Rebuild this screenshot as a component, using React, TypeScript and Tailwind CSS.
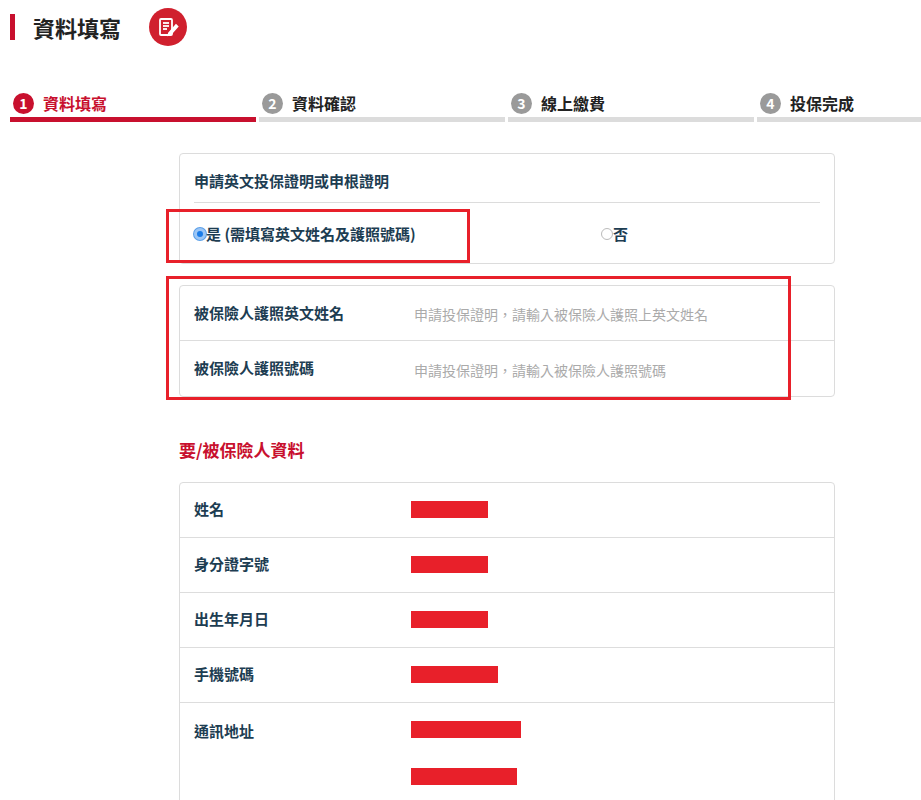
import React from "react";

const F = { fontFamily: '"Noto Sans CJK TC", "Noto Sans", sans-serif' };

function Step({ n, label, active }: { n: string; label: string; active?: boolean }) {
  return (
    <div className="w-[246px] shrink-0 flex flex-col">
      <div className="flex items-center gap-[9px] h-[28px] pl-[3px]">
        <span className={`w-[21px] h-[21px] rounded-full flex items-center justify-center text-white text-[14px] font-bold ${active ? "bg-[#c8102e]" : "bg-[#9a9a9a]"}`}>{n}</span>
        <span className={`text-[16px] font-bold ${active ? "text-[#c8102e]" : "text-[#222]"}`}>{label}</span>
      </div>
      <div className={`h-[5px] ${active ? "bg-[#c8102e]" : "bg-[#dcdcdc]"}`} />
    </div>
  );
}

function Row({ label, children, last, tall }: { label: string; children?: React.ReactNode; last?: boolean; tall?: boolean }) {
  return (
    <div className={`flex ${tall ? "items-start pt-[17px] h-[100px]" : "items-center h-[55px]"} ${last ? "" : "border-b border-[#dddddd]"}`}>
      <div className="w-[231px] pl-[14px] text-[15px] font-semibold text-[#1d3d52]">{label}</div>
      <div className="flex-1">{children}</div>
    </div>
  );
}

const Bar = ({ w }: { w: number }) => <div className="h-[17px] bg-[#e8202a]" style={{ width: w }} />;

export default function App() {
  return (
    <div className="relative w-[921px] h-[800px] bg-white overflow-hidden" style={F}>
      <div className="flex items-center h-[54px] pl-[10px]">
        <div className="w-[5px] h-[26px] bg-[#c8102e]" />
        <div className="ml-[18px] text-[22px] font-bold text-[#222]">資料填寫</div>
        <div className="ml-[28px] w-[38px] h-[38px] rounded-full bg-[#d0202e] flex items-center justify-center">
          <svg width="22" height="22" viewBox="0 0 22 22" fill="none" stroke="white" strokeWidth="1.8">
            <rect x="3" y="3" width="12" height="16" rx="1" />
            <line x1="6" y1="7" x2="12" y2="7" />
            <line x1="6" y1="10" x2="12" y2="10" />
            <line x1="6" y1="13" x2="10" y2="13" />
            <path d="M12 17 L19 9 L20.5 10.5 L13.5 18.5 L11.5 19 Z" fill="white" />
          </svg>
        </div>
      </div>
      <div className="flex gap-[3px] pl-[10px] mt-[35px]">
        <Step n="1" label="資料填寫" active />
        <Step n="2" label="資料確認" />
        <Step n="3" label="線上繳費" />
        <Step n="4" label="投保完成" />
      </div>

      <div className="ml-[179px] w-[656px] mt-[31px]">
        <div className="border border-[#dcdcdc] rounded-[4px] h-[111px] px-[14px]">
          <div className="h-[49px] flex items-center pt-[6px] text-[15px] font-semibold text-[#1d3d52] border-b border-[#dcdcdc]">申請英文投保證明或申根證明</div>
          <div className="flex items-center h-[62px] text-[15px] font-semibold text-[#1d3d52]">
            <div className="w-[407px] flex items-center">
              <span className="w-[12px] h-[12px] rounded-full bg-[#1a7ce8] border-[3px] border-[#9cc6f5] ring-1 ring-[#5a9fe8]" />
              是 (需填寫英文姓名及護照號碼)
            </div>
            <div className="flex items-center">
              <span className="w-[12px] h-[12px] rounded-full border border-[#bbb]" />否
            </div>
          </div>
        </div>
        <div className="border border-[#dcdcdc] rounded-[4px] mt-[21px]">
          <Row label="被保險人護照英文姓名"><span className="text-[14px] text-[#aaa] ml-[3px]">申請投保證明，請輸入被保險人護照上英文姓名</span></Row>
          <Row label="被保險人護照號碼" last><span className="text-[14px] text-[#aaa] ml-[3px]">申請投保證明，請輸入被保險人護照號碼</span></Row>
        </div>
        <div className="mt-[40px] text-[17px] font-semibold text-[#c8102e]">要/被保險人資料</div>
        <div className="border border-[#dcdcdc] rounded-[4px] mt-[19px]">
          <Row label="姓名"><Bar w={77} /></Row>
          <Row label="身分證字號"><Bar w={77} /></Row>
          <Row label="出生年月日"><Bar w={77} /></Row>
          <Row label="手機號碼"><Bar w={87} /></Row>
          <Row label="通訊地址" tall last>
            <div className="flex flex-col gap-[30px] pt-[1px]"><Bar w={110} /><Bar w={106} /></div>
          </Row>
        </div>
      </div>

      <div className="absolute left-[166px] top-[209px] w-[304px] h-[54px] border-[3px] border-[#e8202a]" />
      <div className="absolute left-[166px] top-[276px] w-[625px] h-[124px] border-[3px] border-[#e8202a]" />
    </div>
  );
}
